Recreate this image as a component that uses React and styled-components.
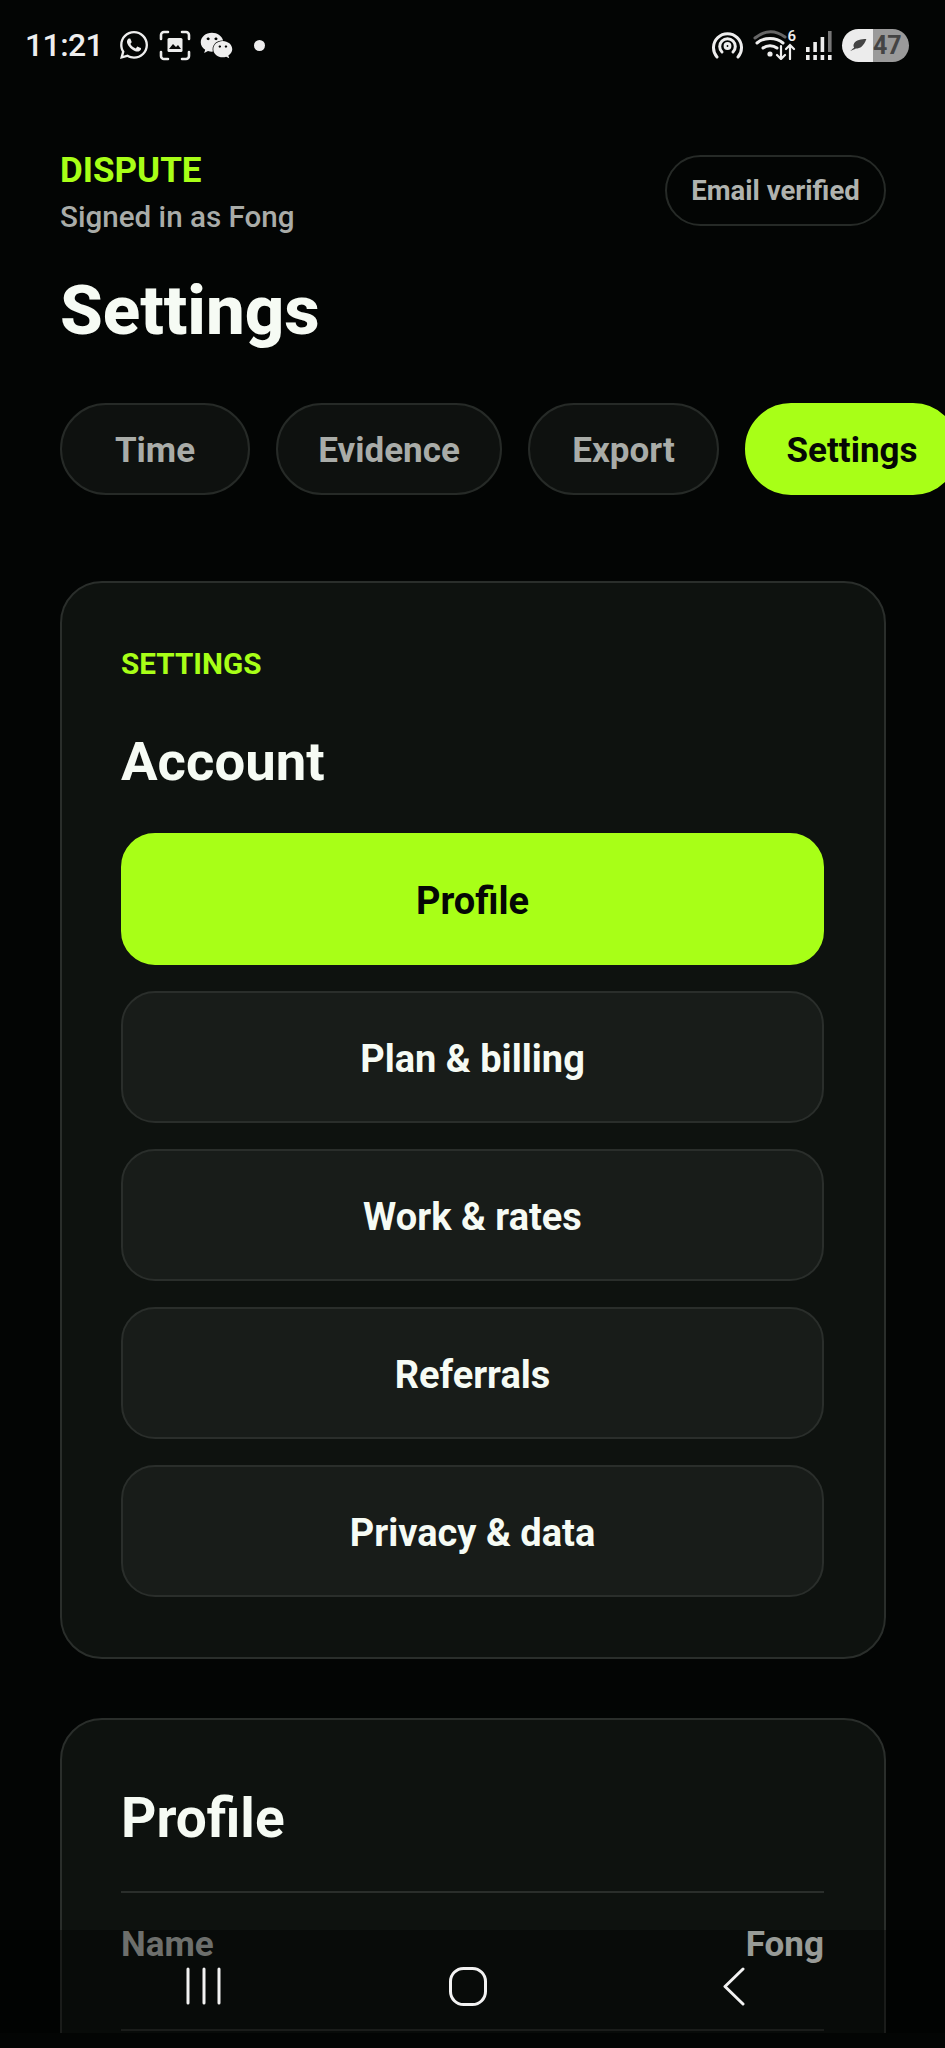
import React from 'react'
import styled, { createGlobalStyle } from 'styled-components'
import { FaWhatsapp, FaWeixin } from 'react-icons/fa'

const GlobalStyle = createGlobalStyle`
  html, body {
    margin: 0;
    padding: 0;
    background: #030504;
  }
  * {
    box-sizing: border-box;
  }
`

const Screen = styled.div`
  position: relative;
  width: 945px;
  height: 2048px;
  overflow: hidden;
  background: #030504;
  font-family: Roboto, 'Liberation Sans', sans-serif;
  color: #f6fbf4;
`

const StatusBar = styled.div`
  height: 90px;
  padding: 0 36px 0 25px;
  display: flex;
  align-items: center;
  justify-content: space-between;
  color: #eeeeee;
`

const StatusGroup = styled.div`
  display: flex;
  align-items: center;
  gap: ${(p) => p.$gap}px;
`

const Clock = styled.span`
  font-size: 32px;
  font-weight: 500;
  letter-spacing: -0.6px;
  margin-right: 6px;
`

const Dot = styled.span`
  width: 11px;
  height: 11px;
  border-radius: 50%;
  background: #eeeeee;
  margin-left: 12px;
`

const WifiWrap = styled.div`
  position: relative;
  width: 43px;
  height: 30px;
`

const WifiCount = styled.span`
  position: absolute;
  top: -2px;
  right: 0;
  font-size: 15px;
  font-weight: 600;
  line-height: 16px;
`

const Battery = styled.div`
  width: 67px;
  height: 33px;
  border-radius: 17px;
  overflow: hidden;
  background: linear-gradient(90deg, #ececec 46%, #9a9a9a 46%);
  display: flex;
  align-items: center;
  padding-left: 7px;
  gap: 5px;
  color: #444;
  font-size: 25px;
  font-weight: 700;
`

const Page = styled.div`
  padding: 0 59px 0 60px;
`

const Header = styled.div`
  margin-top: 61px;
  display: flex;
  justify-content: space-between;
  align-items: flex-start;
`

const Brand = styled.div`
  color: #a8ff17;
  font-size: 35px;
  font-weight: 700;
  line-height: 40px;
`

const Signed = styled.div`
  color: #a9aca8;
  font-size: 29.6px;
  font-weight: 500;
  line-height: 36px;
  margin-top: 8px;
`

const Pill = styled.div`
  margin-top: 4px;
  width: 221px;
  height: 71px;
  border: 2px solid #262a27;
  border-radius: 36px;
  display: flex;
  align-items: center;
  justify-content: center;
  color: #b0b3af;
  font-size: 27.5px;
  font-weight: 700;
`

const Title = styled.h1`
  margin: 34px 0 0;
  font-size: 69px;
  font-weight: 800;
  line-height: 84px;
`

const Tabs = styled.div`
  margin-top: 50px;
  display: flex;
  gap: 26px;
  width: 886px;
`

const Tab = styled.div`
  flex: none;
  width: ${(p) => p.$width}px;
  height: 92px;
  padding-top: 3px;
  border-radius: 46px;
  display: flex;
  align-items: center;
  justify-content: center;
  font-size: 35px;
  font-weight: 700;
  background: ${(p) => (p.$active ? '#a8ff17' : '#0e110f')};
  border: 2px solid ${(p) => (p.$active ? '#a8ff17' : '#262a27')};
  color: ${(p) => (p.$active ? '#050705' : '#a9aca8')};
`

const Card = styled.section`
  margin-top: ${(p) => p.$top}px;
  padding: ${(p) => p.$pad}px 60px 60px 59px;
  background: #0e120f;
  border: 2px solid #2a2e2b;
  border-radius: 42px;
`

const Eyebrow = styled.div`
  color: #a8ff17;
  font-size: 29.7px;
  font-weight: 700;
  line-height: 34px;
`

const CardTitle = styled.h2`
  margin: ${(p) => p.$top}px 0 0;
  font-size: ${(p) => p.$size}px;
  font-weight: 700;
  line-height: 60px;
`

const Menu = styled.div`
  margin-top: 42px;
  display: flex;
  flex-direction: column;
  gap: 26px;
`

const MenuItem = styled.div`
  height: 132px;
  padding-top: 3px;
  border-radius: 34px;
  display: flex;
  align-items: center;
  justify-content: center;
  font-size: 38px;
  font-weight: 700;
  background: ${(p) => (p.$active ? '#a8ff17' : '#181c19')};
  border: 2px solid ${(p) => (p.$active ? '#a8ff17' : '#2a2e2b')};
  color: ${(p) => (p.$active ? '#050705' : '#f6fbf4')};
`

const Rows = styled.div`
  margin-top: 43px;
`

const Row = styled.div`
  border-top: 2px solid #2a2e2b;
  padding-top: 31px;
  height: 138px;
  display: flex;
  justify-content: space-between;
  font-size: 35px;
  font-weight: 700;
  line-height: 42px;
`

const RowLabel = styled.span`
  color: #b0b3af;
`

const NavBar = styled.div`
  position: absolute;
  left: 0;
  right: 0;
  bottom: 0;
  height: 118px;
  background: rgba(0, 0, 0, 0.38);
  background-clip: padding-box;
  border-bottom: 15px solid #030504;
  display: flex;
  align-items: flex-start;
  padding: 37px 0 0 186px;
`

const NavSlot = styled.div`
  margin-left: ${(p) => p.$left || 0}px;
  display: flex;
`

const Hotspot = () => (
  <svg width="31" height="28" viewBox="0 0 31 28" fill="none" stroke="#eee" strokeWidth="3" strokeLinecap="round">
    <path d="M5 26a14 14 0 1 1 21 0" />
    <path d="M10 21a7.8 7.8 0 1 1 11 0" />
    <circle cx="15.5" cy="15" r="2.4" />
  </svg>
)

const WifiIcon = () => (
  <svg width="43" height="30" viewBox="0 0 43 30" fill="none" stroke="#eee" strokeWidth="3" strokeLinecap="round">
    <path d="M2 8Q17-4 32 7" stroke="#666" />
    <path d="M4 13C11 7 23 7 30 13" />
    <path d="M10 18c4-3 10-3 14 0" />
    <circle cx="17" cy="24" r="2.6" fill="#eee" stroke="none" />
    <path d="M28 16v13M24 25l4 4 4-4" strokeWidth="2.2" />
    <path d="M37 29V15M33 19l4-4 4 4" strokeWidth="2.2" />
  </svg>
)

const Signal = () => (
  <svg width="26" height="29" viewBox="0 0 26 29" fill="#eee">
    <rect x="0" y="16" width="3.6" height="5" />
    <rect x="7.3" y="11" width="3.6" height="10" />
    <rect x="14.6" y="6" width="3.6" height="15" />
    <rect x="22" y="0" width="3.6" height="21" fill="#777" />
    <rect x="0" y="24" width="3.6" height="5" />
    <rect x="7.3" y="24" width="3.6" height="5" />
    <rect x="14.6" y="24" width="3.6" height="5" />
    <rect x="22" y="24" width="3.6" height="5" />
  </svg>
)

const ScanImage = () => (
  <svg width="32" height="31" viewBox="0 0 32 31" fill="none" stroke="#eee" strokeWidth="2.6" strokeLinecap="round">
    <path d="M2 9V5a3 3 0 0 1 3-3h4M23 2h4a3 3 0 0 1 3 3v4M30 22v4a3 3 0 0 1-3 3h-4M9 29H5a3 3 0 0 1-3-3v-4" />
    <rect x="8.5" y="8" width="15" height="14" rx="1.5" fill="#eee" stroke="none" />
    <path d="M10 19l4-5 3 3 2-2 3 4z" fill="#0a0a0a" stroke="none" />
  </svg>
)

const Leaf = () => (
  <svg width="19" height="14" viewBox="0 0 20 16" fill="#444">
    <path d="M0 15c3-1 5-2 7-3 5 0 9-3 12-11C13 1 7 2 5 6c-1 2-1 3 0 5-2 1-3 3-5 4z" />
  </svg>
)

const Recents = () => (
  <svg width="36" height="38" viewBox="0 0 36 38" stroke="#f2f2f2" strokeWidth="3" strokeLinecap="round">
    <path d="M2 2v34M18 2v34M33 2v34" />
  </svg>
)

const Home = () => (
  <svg width="38" height="39" viewBox="0 0 38 39" fill="none" stroke="#f2f2f2" strokeWidth="3">
    <rect x="1.5" y="1.5" width="35" height="36" rx="13" />
  </svg>
)

const Back = () => (
  <svg width="22" height="39" viewBox="0 0 22 39" fill="none" stroke="#f2f2f2" strokeWidth="3" strokeLinecap="round" strokeLinejoin="round">
    <path d="M20 2L2 19.5 20 37" />
  </svg>
)

const TABS = [
  { name: 'Time', width: 190 },
  { name: 'Evidence', width: 226 },
  { name: 'Export', width: 191 },
  { name: 'Settings', width: 214, active: true },
]

const MENU = ['Profile', 'Plan & billing', 'Work & rates', 'Referrals', 'Privacy & data']

export default function App() {
  return (
    <Screen>
      <GlobalStyle />
      <StatusBar>
        <StatusGroup $gap={9}>
          <Clock>11:21</Clock>
          <FaWhatsapp size={32} />
          <ScanImage />
          <FaWeixin size={33} />
          <Dot />
        </StatusGroup>
        <StatusGroup $gap={10}>
          <Hotspot />
          <WifiWrap>
            <WifiIcon />
            <WifiCount>6</WifiCount>
          </WifiWrap>
          <Signal />
          <Battery>
            <Leaf />
            47
          </Battery>
        </StatusGroup>
      </StatusBar>
      <Page>
        <Header>
          <div>
            <Brand>DISPUTE</Brand>
            <Signed>Signed in as Fong</Signed>
          </div>
          <Pill>Email verified</Pill>
        </Header>
        <Title>Settings</Title>
        <Tabs>
          {TABS.map((tab) => (
            <Tab key={tab.name} $width={tab.width} $active={tab.active}>
              {tab.name}
            </Tab>
          ))}
        </Tabs>
        <Card $top={86} $pad={64}>
          <Eyebrow>SETTINGS</Eyebrow>
          <CardTitle $top={50} $size={54.5}>Account</CardTitle>
          <Menu>
            {MENU.map((item, index) => (
              <MenuItem key={item} $active={index === 0}>
                {item}
              </MenuItem>
            ))}
          </Menu>
        </Card>
        <Card $top={59} $pad={68}>
          <CardTitle $top={0} $size={55}>Profile</CardTitle>
          <Rows>
            <Row>
              <RowLabel>Name</RowLabel>
              <span>Fong</span>
            </Row>
            <Row />
          </Rows>
        </Card>
      </Page>
      <NavBar>
        <NavSlot><Recents /></NavSlot>
        <NavSlot $left={227}><Home /></NavSlot>
        <NavSlot $left={236}><Back /></NavSlot>
      </NavBar>
    </Screen>
  )
}
